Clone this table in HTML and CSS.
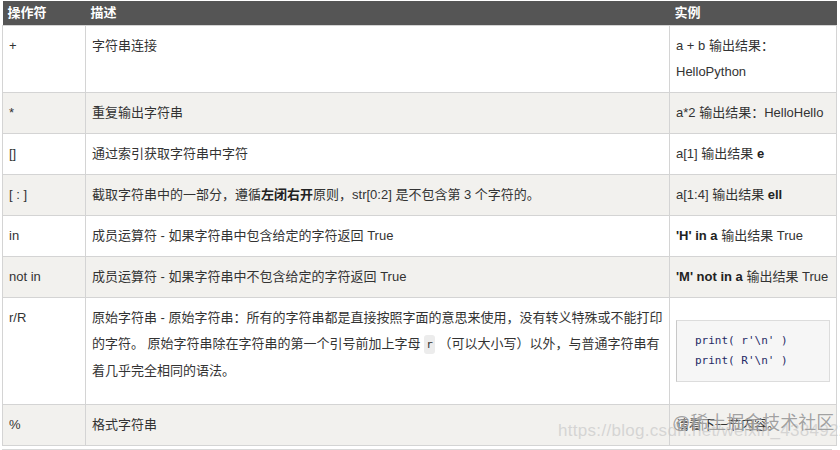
FILE: index.html
```html
<!DOCTYPE html>
<html lang="zh-CN">
<head>
    <meta charset="UTF-8">
    <meta name="viewport" content="width=device-width, initial-scale=1.0">
    <title>Python 字符串运算符</title>
    <link rel="stylesheet" href="styles.css">
</head>
<body>
    <div class="wrap">
        <!-- String operators table -->
        <table class="ops">
            <colgroup>
                <col class="c-op">
                <col class="c-desc">
                <col class="c-ex">
            </colgroup>
            <thead>
                <tr>
                    <th>操作符</th>
                    <th>描述</th>
                    <th>实例</th>
                </tr>
            </thead>
            <tbody>
                <tr>
                    <td>+</td>
                    <td>字符串连接</td>
                    <td>a + b 输出结果：<br>HelloPython</td>
                </tr>
                <tr>
                    <td>*</td>
                    <td>重复输出字符串</td>
                    <td>a*2 输出结果：HelloHello</td>
                </tr>
                <tr>
                    <td>[]</td>
                    <td>通过索引获取字符串中字符</td>
                    <td>a[1] 输出结果 <b>e</b></td>
                </tr>
                <tr>
                    <td>[ : ]</td>
                    <td>截取字符串中的一部分，遵循<b>左闭右开</b>原则，str[0:2] 是不包含第 3 个字符的。</td>
                    <td>a[1:4] 输出结果 <b>ell</b></td>
                </tr>
                <tr>
                    <td>in</td>
                    <td>成员运算符 - 如果字符串中包含给定的字符返回 True</td>
                    <td><b>'H' in a</b> 输出结果 True</td>
                </tr>
                <tr>
                    <td>not in</td>
                    <td>成员运算符 - 如果字符串中不包含给定的字符返回 True</td>
                    <td><b>'M' not in a</b> 输出结果 True</td>
                </tr>
                <tr>
                    <td>r/R</td>
                    <td>原始字符串 - 原始字符串：所有的字符串都是直接按照字面的意思来使用，没有转义特殊或不能打印的字符。 原始字符串除在字符串的第一个引号前加上字母 <code>r</code> （可以大小写）以外，与普通字符串有着几乎完全相同的语法。</td>
                    <td class="mid">
<pre class="code">print( r'\n' )
print( R'\n' )</pre>
                    </td>
                </tr>
                <tr>
                    <td>%</td>
                    <td>格式字符串</td>
                    <td>请看下一节内容。</td>
                </tr>
            </tbody>
        </table>
        <div class="after"></div>

        <!-- Image watermark over the bottom right corner -->
        <span class="wm-url">https://blog.csdn.net/weixin_43849225</span>
        <span class="wm-name">@稀土掘金技术社区</span>
    </div>
</body>
</html>
```

FILE: styles.css
```css
body {
    margin: 0;
    padding: 1px 0 0 2px;
    background: #fff;
    font-family: "Liberation Sans", Arial, "Noto Sans CJK SC", sans-serif;
    font-size: 13px;
    color: #333;
}
.wrap {
    position: relative;
    width: 834px;
}
.ops {
    width: 834px;
    border-collapse: collapse;
    table-layout: fixed;
}
.c-op { width: 83px; }
.c-desc { width: 584px; }
.c-ex { width: 167px; }

.ops th {
    background-color: #555;
    color: #fff;
    font-weight: bold;
    text-align: left;
    height: 24px;
    line-height: 24px;
    padding: 0 5px;
    font-size: 13px;
}
.ops td {
    border: 1px solid #d4d4d4;
    padding: 7px 6px;
    line-height: 26px;
    vertical-align: top;
    word-wrap: break-word;
}
.ops tbody tr:nth-child(even) td {
    background-color: #f2f1ee;
}
.ops td.mid {
    vertical-align: middle;
}
.ops b {
    font-weight: bold;
    color: #222;
}
code {
    font-family: "DejaVu Sans Mono", monospace;
    font-size: 11px;
    background: #ececec;
    border-radius: 3px;
    padding: 3px 2px;
    color: #333;
}
.code {
    margin: 15px 0;
    padding: 10px 18px;
    background: #f6f6f6;
    border: 1px solid #dcdcdc;
    border-left-color: #c8c8c8;
    font-family: "DejaVu Sans Mono", monospace;
    font-size: 11px;
    line-height: 20px;
    color: #1f2a66;
}
.after {
    margin-top: 3px;
    width: 830px;
    height: 1px;
    background: #d8d8d8;
}
.wm-url {
    position: absolute;
    left: 556px;
    top: 420px;
    font-size: 17px;
    color: rgba(200, 200, 200, 0.7);
    white-space: nowrap;
    letter-spacing: 0.3px;
}
.wm-name {
    position: absolute;
    left: 670px;
    top: 407px;
    font-size: 18px;
    color: rgba(100, 100, 100, 0.6);
    text-shadow: 0 0 1px rgba(255, 255, 255, 0.9);
    white-space: nowrap;
}
```
